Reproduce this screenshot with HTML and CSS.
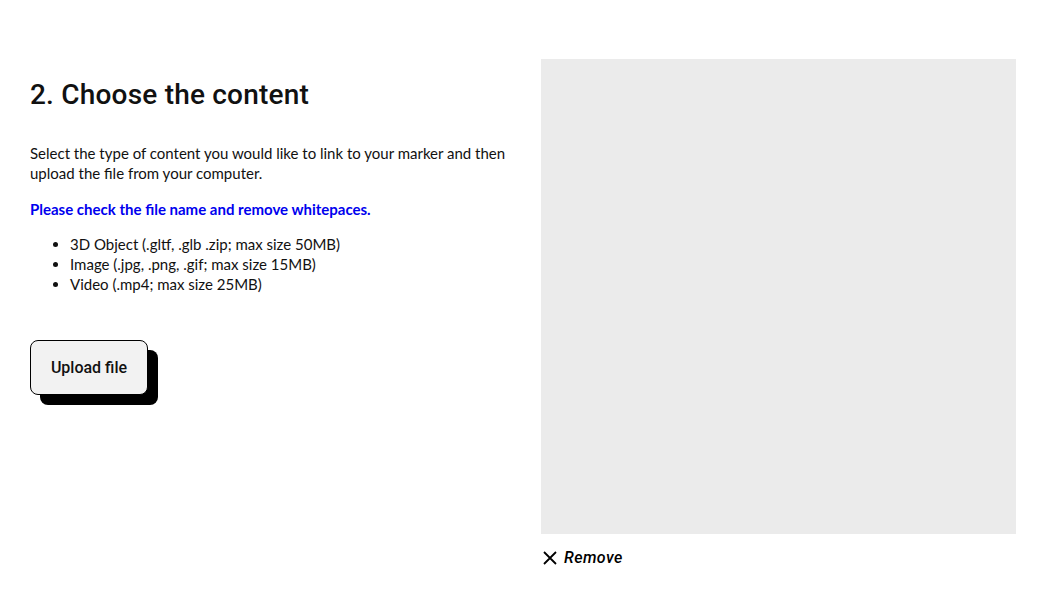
FILE: index.html
```html
<!DOCTYPE html>
<html>
<head>
<meta charset="utf-8">
<link rel="stylesheet" href="styles.css">
</head>
<body>
<main class="page">
  <section class="info">
    <h2 class="title">2. Choose the content</h2>
    <p class="desc">Select the type of content you would like to link to your marker and then upload the file from your computer.</p>
    <p class="warn">Please check the file name and remove whitepaces.</p>
    <ul class="types">
      <li>3D Object (.gltf, .glb .zip; max size 50MB)</li>
      <li>Image (.jpg, .png, .gif; max size 15MB)</li>
      <li>Video (.mp4; max size 25MB)</li>
    </ul>
    <button class="upload">Upload file</button>
  </section>
  <section class="preview">
    <div class="canvas"></div>
    <button class="remove">
      <svg class="x" width="14" height="14" viewBox="0 0 14 14"><path d="M1 1 L13 13 M13 1 L1 13" stroke="#000" stroke-width="1.8" fill="none"/></svg>
      <span>Remove</span>
    </button>
  </section>
</main>
</body>
</html>
```
FILE: styles.css
```css
html, body {
  margin: 0;
  padding: 0;
  background: #fff;
}
body {
  font-family: Lato, "Noto Sans", sans-serif;
  color: #111;
}
.page {
  display: grid;
  grid-template-columns: 1fr 475px;
  column-gap: 21px;
  padding: 59px 27px 0 30px;
}
.info {
  display: flex;
  flex-direction: column;
  align-items: flex-start;
}
.title {
  font-family: Roboto, sans-serif;
  font-weight: 500;
  font-size: 28px;
  letter-spacing: 0.2px;
  margin: 18px 0 0 0;
  line-height: 36px;
}
.desc {
  font-size: 15px;
  line-height: 20px;
  margin: 30px 0 0 0;
}
.warn {
  font-size: 15px;
  line-height: 20px;
  margin: 16px 0 0 0;
  color: #0000ee;
  font-weight: 700;
}
.types {
  font-size: 15px;
  line-height: 20px;
  margin: 15px 0 0 0;
  padding-left: 40px;
}
.upload {
  margin-top: 46px;
  width: 118px;
  height: 55px;
  background: #f2f2f2;
  border: 1px solid #000;
  border-radius: 8px;
  box-shadow: 10px 10px 0 #000;
  font-family: Roboto, sans-serif;
  font-weight: 500;
  font-size: 16px;
  color: #111;
  padding: 0;
}
.preview {
  display: flex;
  flex-direction: column;
  align-items: flex-start;
}
.canvas {
  width: 475px;
  height: 475px;
  background: #ebebeb;
}
.remove {
  margin-top: 14px;
  display: flex;
  align-items: center;
  gap: 7px;
  background: none;
  border: 0;
  padding: 0 0 0 2px;
  font-family: Roboto, sans-serif;
  font-style: italic;
  font-weight: 500;
  font-size: 16px;
  letter-spacing: 0.4px;
  color: #000;
}
```
